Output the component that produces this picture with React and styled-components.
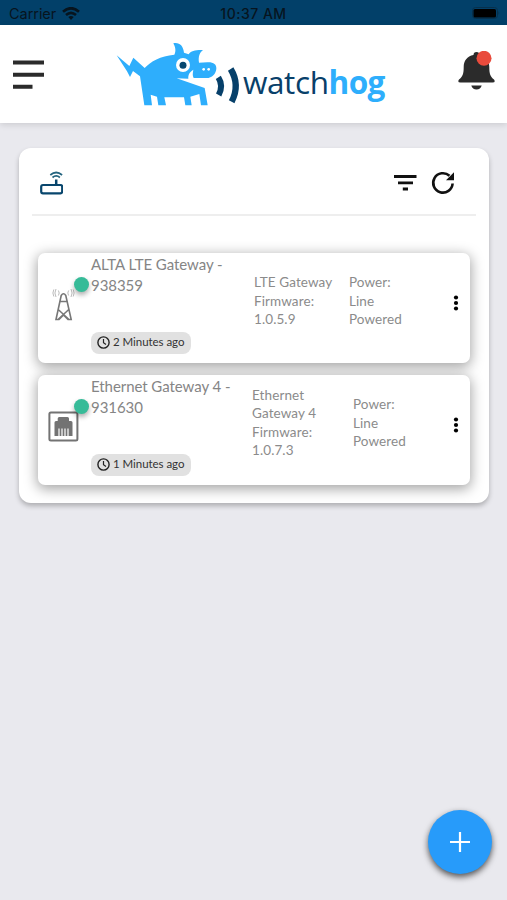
import React from "react";
import styled, { createGlobalStyle } from "styled-components";

const GlobalStyle = createGlobalStyle`
  * { box-sizing: border-box; }
  body { margin: 0; background: #e9e9ee; font-family: Lato, "Open Sans", sans-serif; }
  svg { display: block; flex: none; }
`;

const Screen = styled.div`
  position: relative;
  height: 900px;
  overflow: hidden;
  background: #e9e9ee;
`;

const StatusBar = styled.div`
  height: 25px;
  padding: 2px 7px 0 9px;
  display: grid;
  grid-template-columns: 1fr auto 1fr;
  align-items: center;
  background: #024069;
  color: #07141e;
  font: 400 14.5px Inter, sans-serif;
`;

const Carrier = styled.div`
  display: flex;
  align-items: center;
  gap: 6px;
  letter-spacing: -0.05px;
`;

const Time = styled.div`
  margin-left: -2px;
  font-weight: 500;
  font-size: 14px;
  letter-spacing: 0.5px;
`;

const Battery = styled.svg`
  justify-self: end;
`;

const Header = styled.header`
  height: 98px;
  padding: 0 12px 0 13px;
  display: flex;
  align-items: center;
  background: #fff;
  box-shadow: 0 2px 6px rgba(0, 0, 0, 0.12);
`;

const Brand = styled.div`
  flex: 1;
  display: flex;
  align-items: center;
  padding-left: 66px;
`;

const BrandName = styled.div`
  margin: 16px 0 0 -7px;
  font: 400 31.5px/40px "Open Sans", sans-serif;
  letter-spacing: -0.4px;
  color: #08406a;
  white-space: nowrap;
`;

const BrandAccent = styled.span`
  font-weight: 700;
  letter-spacing: -0.6px;
  color: #2eaefc;
`;

const Panel = styled.main`
  width: 470px;
  height: 355px;
  margin: 25px 0 0 19px;
  padding: 0 13px;
  border-radius: 12px;
  background: #fff;
  box-shadow: 0 3px 5px rgba(0, 0, 0, 0.25);
`;

const Toolbar = styled.div`
  height: 68px;
  padding: 4px 18px 0 7px;
  display: flex;
  align-items: center;
  border-bottom: 2px solid #eee;
`;

const Tools = styled.div`
  margin-left: auto;
  display: flex;
  align-items: center;
  gap: 8px;
`;

const GatewayList = styled.div`
  display: flex;
  flex-direction: column;
  gap: 12px;
  padding: 36.5px 6px 0;
`;

const GatewayCard = styled.article`
  height: 110px;
  padding-left: 9px;
  display: grid;
  grid-template-columns: 44px ${(p) => p.$detail}px ${(p) => p.$power}px 1fr 28px;
  border-radius: 7px;
  background: #fff;
  box-shadow: 0 3px 13px 1px rgba(0, 0, 0, 0.36);
`;

const Kind = styled.div`
  position: relative;
  padding-top: 34px;
`;

const Online = styled.span`
  position: absolute;
  left: 27px;
  top: 24.5px;
  width: 15px;
  height: 15px;
  border-radius: 50%;
  background: #36bb98;
  box-shadow: 0 3px 5px rgba(0, 0, 0, 0.32);
`;

const Summary = styled.div`
  padding-top: 1.5px;
  display: flex;
  flex-direction: column;
  align-items: flex-start;
`;

const Title = styled.div`
  font-size: 15px;
  line-height: 20.5px;
  color: #858585;
  white-space: pre-line;
  letter-spacing: -0.06px;
`;

const Age = styled.div`
  width: 100px;
  height: 22px;
  margin-top: 36.5px;
  padding-left: 6px;
  display: flex;
  align-items: center;
  gap: 3px;
  border-radius: 8px;
  background: #e1e1e1;
  color: #333;
  font-size: 11.5px;
  line-height: 20px;
  letter-spacing: -0.05px;
  white-space: nowrap;
`;

const AgeText = styled.span`
  padding-bottom: 2px;
`;

const Detail = styled.div`
  align-self: center;
  padding-bottom: 13.5px;
  font-size: 13.5px;
  line-height: 18.3px;
  letter-spacing: 0.1px;
  color: #8b8b8b;
  white-space: pre-line;
`;

const More = styled.svg`
  align-self: center;
  margin-top: -10px;
  grid-column: 5;
`;

const AddButton = styled.button`
  position: absolute;
  right: 15px;
  top: 809.5px;
  width: 64px;
  height: 64px;
  padding: 0;
  display: grid;
  place-items: center;
  border: 0;
  border-radius: 50%;
  background: #279bfa;
  box-shadow: 0 3px 6px rgba(0, 0, 0, 0.65);
`;

const Wifi = () => (
  <svg width="18" height="14" viewBox="0 0 18 14" fill="none" stroke="#07141e">
    <path d="M1 4.7Q9-2.200 17 4.700" strokeWidth="2.700" />
    <path d="M4 8Q9 3.600 14 8" strokeWidth="2.600" />
    <path d="M6.300 10Q9 7.800 11.700 10L9 13Z" fill="#07141e" stroke="none" />
  </svg>
);

const MenuIcon = () => (
  <svg width="31" height="30" viewBox="0 0 31 30" fill="#2b2b2b">
    <path d="M0 1.500H31V5.500H0ZM0 13.700H31V17.700H0ZM0 25.800H19.500V29.800H0Z" />
  </svg>
);

const HogMark = () => (
  <svg width="140" height="75" viewBox="0 5 420 225">
    <path
      fill="#2eaefc"
      d="M20 60L58 92L70 67L104 98C122 78 151 62 193 58C199 47 196 35 190 24C208 20 220 32 222 52L236 57C242 46 260 43 279 44C270 51 264 62 267 82L292 81C310 80 320 87 319 100C318 115 306 128 290 128L251 128C247 121 248 113 250 103C238 110 234 119 235 130L200 129L284 158L293 210H273L268 176L241 184L245 210H226L222 186H163L168 210H145L141 184L122 178L126 210H103L90 123L69 107L60 125L51 108Z"
    />
    <circle cx="219" cy="89" r="21" fill="#fff" />
    <circle cx="219" cy="90" r="10.500" fill="#07476f" />
    <circle cx="281" cy="102" r="4" fill="#fff" />
    <circle cx="296" cy="102" r="4" fill="#fff" />
    <path d="M325 126Q341 151 326 179" fill="none" stroke="#07406a" strokeWidth="18" />
    <path d="M362 101Q391 149 365 199" fill="none" stroke="#07406a" strokeWidth="19" />
  </svg>
);

const BellIcon = () => (
  <svg width="37" height="46" viewBox="0 2 37 46">
    <path
      fill="#2b2b2b"
      d="M15.500 6Q15.500 3 18.500 3T21.500 6C28 7 31.300 12 31.300 18C31.300 25 32.300 27.500 36 30.500Q38 33.500 34.500 33.500H2.500Q-1 33.500 1 30.500C4.700 27.500 5.700 25 5.700 18C5.700 12 9 7 15.500 6Z"
    />
    <path d="M13.300 36.500H23.700Q22.500 40.500 18.500 40.500T13.300 36.500Z" fill="#2b2b2b" />
    <circle cx="26" cy="9.300" r="7.500" fill="#e94b3c" />
  </svg>
);

const RouterIcon = () => (
  <svg width="24" height="24" viewBox="0 0 24 24" fill="none" stroke="#08466d">
    <rect x="2.200" y="14" width="21" height="8.300" rx="1.800" strokeWidth="2.200" />
    <path d="M17.200 8.500V14" strokeWidth="2.500" />
    <path d="M11.300 4Q17.200-1 23.100 4M13.500 6.500Q17.200 3.300 20.900 6.500" strokeWidth="1.700" stroke="#24647f" />
  </svg>
);

const FilterIcon = () => (
  <svg width="30" height="30" viewBox="0 0 30 30" fill="#111">
    <path d="M4 7H26.500V9.900H4ZM8 13.400H23V16.200H8ZM12.800 19.500H18V22.400H12.800Z" />
  </svg>
);

const RefreshIcon = () => (
  <svg width="30" height="30" viewBox="0 0 30 30">
    <path d="M24.600 15.500A9.700 9.700 0 1 1 21.500 7.800" fill="none" stroke="#111" strokeWidth="2.600" />
    <path d="M26 4.300V12.300H18Z" fill="#111" />
  </svg>
);

const TowerIcon = () => (
  <svg width="34" height="36" viewBox="0 0 34 36" fill="none" stroke="#777" strokeWidth="1.600">
    <path d="M14.200 8.500L9 32.500H12L16.500 28L21 32.500H24.200L18.800 8.500Q16.500 5 14.200 8.500ZM13.200 14.500H19.800M11.200 22.500L21.500 32M21.800 22.500L11.500 32" />
    <path
      d="M11.400 3.500Q13 6 11.400 8.500M9 2Q6.800 6 9 10M6.800 2.500Q5 6 6.800 9.500M21.600 3.500Q20 6 21.600 8.500M24 2Q26.200 6 24 10M26.200 2.500Q28 6 26.200 9.500"
      stroke="#bbb"
      strokeWidth="1"
    />
  </svg>
);

const EthernetIcon = () => (
  <svg width="34" height="36" viewBox="0 0 34 36">
    <rect x="2.400" y="3.500" width="28" height="28" rx="1.500" fill="none" stroke="#737373" strokeWidth="2" />
    <path fill="#737373" d="M7.500 27V13.500Q7.500 12 9 12H10.700V9.500Q10.700 8 12.200 8H20.500Q22 8 22 9.500V12H24Q25.500 12 25.500 13.500V27Z" />
    <path stroke="#fff" strokeWidth="1.200" d="M12 19.500V27.500M15 19.500V27.500M18 19.500V27.500M21 19.500V27.500" />
  </svg>
);

const ClockIcon = () => (
  <svg width="13" height="13" viewBox="0 0 13 13" fill="none" stroke="#222" strokeWidth="1.400">
    <circle cx="6.500" cy="6.500" r="5.600" />
    <path d="M6.500 3V6.700L9 8.600" strokeWidth="1.200" />
  </svg>
);

const gateways = [
  {
    icon: <TowerIcon />,
    title: "ALTA LTE Gateway -\n938359",
    age: "2 Minutes ago",
    detail: "LTE Gateway\nFirmware:\n1.0.5.9",
    columns: [163, 95],
  },
  {
    icon: <EthernetIcon />,
    title: "Ethernet Gateway 4 -\n931630",
    age: "1 Minutes ago",
    detail: "Ethernet\nGateway 4\nFirmware:\n1.0.7.3",
    columns: [161, 101],
  },
];

function Gateway({ item }) {
  return (
    <GatewayCard $detail={item.columns[0]} $power={item.columns[1]}>
      <Kind>
        {item.icon}
        <Online />
      </Kind>
      <Summary>
        <Title>{item.title}</Title>
        <Age>
          <ClockIcon />
          <AgeText>{item.age}</AgeText>
        </Age>
      </Summary>
      <Detail>{item.detail}</Detail>
      <Detail>{"Power:\nLine\nPowered"}</Detail>
      <More width="28" height="20" viewBox="0 0 28 20">
        <circle cx="14" cy="4.500" r="2.100" />
        <circle cx="14" cy="10" r="2.100" />
        <circle cx="14" cy="15.500" r="2.100" />
      </More>
    </GatewayCard>
  );
}

export default function App() {
  return (
    <Screen>
      <GlobalStyle />
      <StatusBar>
        <Carrier>
          Carrier
          <Wifi />
        </Carrier>
        <Time>10:37 AM</Time>
        <Battery width="28" height="13" viewBox="0 0 28 13">
          <rect x=".5" y=".5" width="25" height="11" rx="3" fill="none" stroke="#07304c" />
          <rect x="1.500" y="2" width="22.500" height="8.500" rx="1.500" fill="#000" />
          <path d="M26.500 4Q28 6 26.500 8Z" fill="#07304c" />
        </Battery>
      </StatusBar>
      <Header>
        <MenuIcon />
        <Brand>
          <HogMark />
          <BrandName>
            watch<BrandAccent>hog</BrandAccent>
          </BrandName>
        </Brand>
        <BellIcon />
      </Header>
      <Panel>
        <Toolbar>
          <RouterIcon />
          <Tools>
            <FilterIcon />
            <RefreshIcon />
          </Tools>
        </Toolbar>
        <GatewayList>
          {gateways.map((item) => (
            <Gateway key={item.title} item={item} />
          ))}
        </GatewayList>
      </Panel>
      <AddButton aria-label="Add gateway">
        <svg width="22" height="22" viewBox="0 0 22 22" stroke="#fff" strokeWidth="2.200">
          <path d="M11 1V21M1 11H21" />
        </svg>
      </AddButton>
    </Screen>
  );
}
